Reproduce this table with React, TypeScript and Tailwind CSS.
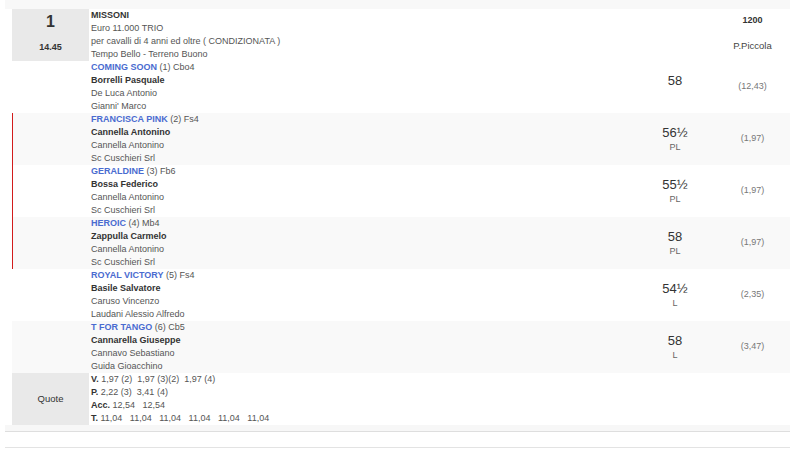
import React from 'react';

type Runner = {
  horse: string;
  num: number;
  sex: string;
  jockey: string;
  trainer: string;
  owner: string;
  weight: string;
  tag: string;
  odds: string;
  flagged?: boolean;
};

const RUNNERS: Runner[] = [
  { horse: 'COMING SOON', num: 1, sex: 'Cbo4', jockey: 'Borrelli Pasquale', trainer: 'De Luca Antonio', owner: "Gianni' Marco", weight: '58', tag: '', odds: '(12,43)' },
  { horse: 'FRANCISCA PINK', num: 2, sex: 'Fs4', jockey: 'Cannella Antonino', trainer: 'Cannella Antonino', owner: 'Sc Cuschieri Srl', weight: '56½', tag: 'PL', odds: '(1,97)', flagged: true },
  { horse: 'GERALDINE', num: 3, sex: 'Fb6', jockey: 'Bossa Federico', trainer: 'Cannella Antonino', owner: 'Sc Cuschieri Srl', weight: '55½', tag: 'PL', odds: '(1,97)', flagged: true },
  { horse: 'HEROIC', num: 4, sex: 'Mb4', jockey: 'Zappulla Carmelo', trainer: 'Cannella Antonino', owner: 'Sc Cuschieri Srl', weight: '58', tag: 'PL', odds: '(1,97)', flagged: true },
  { horse: 'ROYAL VICTORY', num: 5, sex: 'Fs4', jockey: 'Basile Salvatore', trainer: 'Caruso Vincenzo', owner: 'Laudani Alessio Alfredo', weight: '54½', tag: 'L', odds: '(2,35)' },
  { horse: 'T FOR TANGO', num: 6, sex: 'Cb5', jockey: 'Cannarella Giuseppe', trainer: 'Cannavo Sebastiano', owner: 'Guida Gioacchino', weight: '58', tag: 'L', odds: '(3,47)' },
];

function RunnerRow({ r, striped }: { r: Runner; striped: boolean }) {
  return (
    <div className={`flex h-[52px] ${striped ? 'bg-[#f9f9f9]' : 'bg-white'}`}>
      <div className="w-[12px] bg-white" />
      <div className={`w-[77px] ${r.flagged ? 'border-l border-[#d21c1c]' : ''}`} />
      <div className="flex-1 pl-[2px] text-[9px] leading-[13px] text-[#555]">
        <div>
          <span className="font-bold text-[#4a6bd0]">{r.horse}</span> ({r.num}) {r.sex}
        </div>
        <div className="font-bold text-[#333]">{r.jockey}</div>
        <div>{r.trainer}</div>
        <div>{r.owner}</div>
      </div>
      <div className="flex w-[80px] flex-col items-center justify-center">
        <div className="text-[13px] leading-[16px] text-[#333]">{r.weight}</div>
        <div className="text-[9px] leading-[13px] text-[#666]">{r.tag || '\u00a0'}</div>
      </div>
      <div className="flex w-[75px] items-center justify-center text-[9px] text-[#777]">{r.odds}</div>
    </div>
  );
}

export default function App() {
  return (
    <div className="h-[450px] w-[790px] overflow-hidden bg-white font-['Liberation_Sans',Arial,sans-serif]">
      <div className="ml-[5px] h-[9px] bg-[#f8f8f8]" />

      {/* race header */}
      <div className="flex h-[52px] bg-white">
        <div className="w-[12px]" />
        <div className="flex w-[77px] flex-col bg-[#e9e9e9] text-[#333]">
          <div className="flex h-[26px] items-center justify-center text-[16px] font-bold">1</div>
          <div className="flex h-[26px] items-center justify-center text-[9px] font-bold">14.45</div>
        </div>
        <div className="flex-1 pl-[2px] text-[9px] leading-[13px] text-[#555]">
          <div className="font-bold text-[#333]">MISSONI</div>
          <div>Euro 11.000 TRIO</div>
          <div>per cavalli di 4 anni ed oltre ( CONDIZIONATA )</div>
          <div>Tempo Bello - Terreno Buono</div>
        </div>
        <div className="w-[80px]" />
        <div className="flex w-[75px] flex-col text-[9px] text-[#333]">
          <div className="flex h-[24px] items-center justify-center font-bold">1200</div>
          <div className="flex h-[26px] items-center justify-center text-[9.5px] text-[#444]">P.Piccola</div>
        </div>
      </div>

      {RUNNERS.map((r, i) => (
        <RunnerRow key={r.num} r={r} striped={i % 2 === 1} />
      ))}

      {/* quote */}
      <div className="flex h-[52px] bg-white">
        <div className="w-[12px]" />
        <div className="flex w-[77px] items-center justify-center bg-[#e9e9e9] text-[9.5px] text-[#333]">Quote</div>
        <div className="flex-1 whitespace-pre pl-[2px] text-[9px] leading-[13px] text-[#555]">
          <div><b className="text-[#333]">V.</b> 1,97 (2)  1,97 (3)(2)  1,97 (4)</div>
          <div><b className="text-[#333]">P.</b> 2,22 (3)  3,41 (4)</div>
          <div><b className="text-[#333]">Acc.</b> 12,54   12,54</div>
          <div><b className="text-[#333]">T.</b> 11,04   11,04   11,04   11,04   11,04   11,04</div>
        </div>
      </div>

      <div className="ml-[5px] h-[6px] bg-[#f7f7f7]" />
      <div className="ml-[5px] h-[16px] border-t border-[#dedede]" />
      <div className="ml-[5px] border-t border-[#e3e3e3]" />
    </div>
  );
}
